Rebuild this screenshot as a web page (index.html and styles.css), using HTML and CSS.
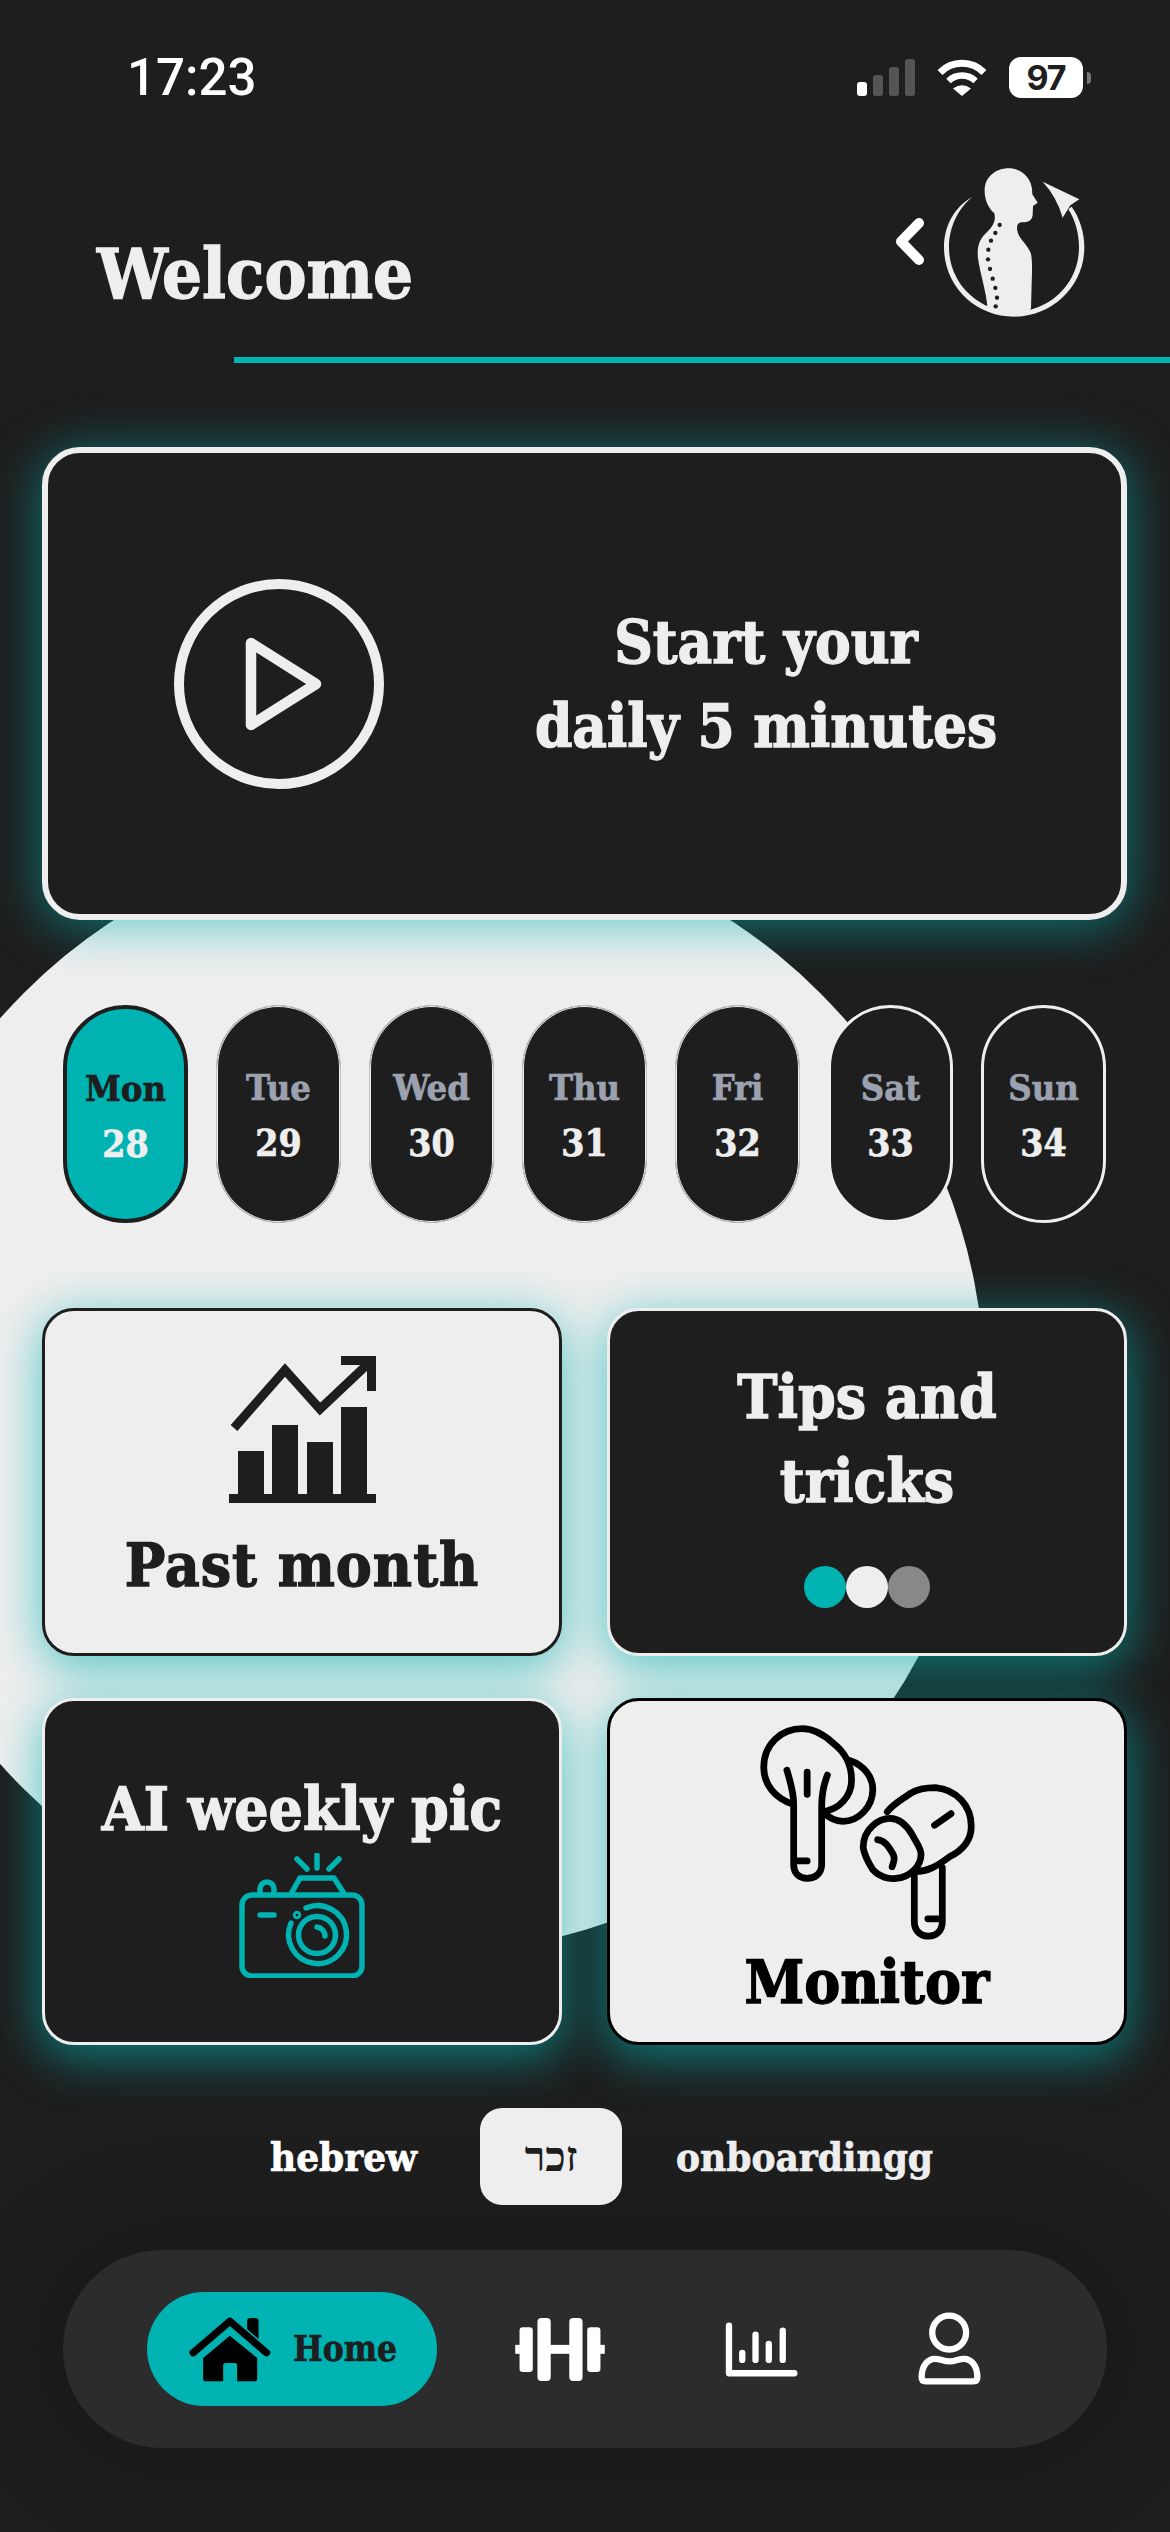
FILE: index.html
```html
<!DOCTYPE html>
<html lang="en">
<head>
<meta charset="utf-8">
<title>Welcome</title>
<link rel="stylesheet" href="styles.css">
</head>
<body>
<div class="screen">
  <div class="backdrop"></div>

  <div class="status">
    <span class="time">17:23</span>
    <div class="status-icons">
      <div class="signal"><i class="bar bar-1"></i><i class="bar bar-2"></i><i class="bar bar-3"></i><i class="bar bar-4"></i></div>
      <svg class="wifi" viewBox="0 0 50 37" width="50" height="37">
        <path d="M3 13.5A31 31 0 0 1 47 13.5" fill="none" stroke="#fff" stroke-width="7"/>
        <path d="M11.5 22A19.5 19.5 0 0 1 38.500 22" fill="none" stroke="#fff" stroke-width="6.500"/>
        <path d="M25 37L16 29.500Q25 23 34 29.500Z" fill="#fff"/>
      </svg>
      <div class="battery"><span class="battery-level">97</span><i class="battery-cap"></i></div>
    </div>
  </div>

  <header class="header">
    <h1 class="title">Welcome</h1>
    <svg class="back" viewBox="0 0 30 47" width="30" height="47">
      <path d="M24 5L6 23.500L24 42" fill="none" stroke="#fff" stroke-width="10" stroke-linecap="round" stroke-linejoin="round"/>
    </svg>
    <svg class="logo" viewBox="0 0 510 510" width="170" height="170">
      <path fill="#eee" d="M127 110C75 140 42 195 42 262C42 378 136 470 252 470C368 470 463 378 463 262C463 215 447 170 425 140L415 148C436 180 447 220 447 262C447 370 360 455 252 455C145 455 57 370 57 262C57 200 85 145 127 110Z"/>
      <path fill="#eee" d="M338 65L448 118L421 136L398 173Q380 110 338 65Z"/>
      <path fill="#eee" d="M193 160C172 140 163 115 164 88C166 50 198 25 236 25C276 25 304 55 306 88L307 103L323 128L309 138L308 165C306 180 296 188 276 187C264 187 259 197 262 212C266 236 290 250 302 278C308 300 306 340 305 370L303 445L290 462H200L172 440C170 400 150 340 144 295C140 255 150 235 172 215C190 198 198 180 193 160Z"/>
      <g fill="#1e1e1e">
        <circle cx="209" cy="195" r="6.500"/><circle cx="196" cy="219" r="6.500"/><circle cx="183" cy="242" r="6.500"/>
        <circle cx="175" cy="269" r="6.500"/><circle cx="174" cy="298" r="6.500"/><circle cx="180" cy="327" r="6.500"/>
        <circle cx="188" cy="356" r="6.500"/><circle cx="196" cy="384" r="6.500"/><circle cx="201" cy="413" r="6.500"/>
        <circle cx="197" cy="439" r="6.500"/>
      </g>
    </svg>
  </header>
  <div class="rule"></div>

  <section class="start-card">
    <svg class="play" viewBox="0 0 210 210" width="210" height="210">
      <circle cx="105" cy="105" r="100" fill="none" stroke="#eee" stroke-width="10"/>
      <path d="M77 64L142 105L77 146Z" fill="none" stroke="#eee" stroke-width="10.500" stroke-linejoin="round"/>
    </svg>
    <p class="start-text">Start your<br>daily 5 minutes</p>
  </section>

  <div class="days">
    <div class="day day-active"><span class="day-name">Mon</span><span class="day-num">28</span></div>
    <div class="day day-soft"><span class="day-name">Tue</span><span class="day-num">29</span></div>
    <div class="day day-soft"><span class="day-name">Wed</span><span class="day-num">30</span></div>
    <div class="day day-soft"><span class="day-name">Thu</span><span class="day-num">31</span></div>
    <div class="day day-soft"><span class="day-name">Fri</span><span class="day-num">32</span></div>
    <div class="day"><span class="day-name">Sat</span><span class="day-num">33</span></div>
    <div class="day"><span class="day-name">Sun</span><span class="day-num">34</span></div>
  </div>

  <div class="cards">
    <article class="card card-light card-past">
      <svg class="card-icon" viewBox="229 1356 147 147" width="147" height="147">
        <g fill="#1e1e1e">
          <rect x="229" y="1494" width="147" height="9"/>
          <rect x="238" y="1451" width="26" height="44"/>
          <rect x="272" y="1425" width="26" height="70"/>
          <rect x="307" y="1442" width="26" height="53"/>
          <rect x="341" y="1407" width="26" height="88"/>
          <rect x="341" y="1356" width="35" height="9"/>
          <rect x="367" y="1356" width="9" height="35"/>
        </g>
        <path d="M234 1428L285 1370L320 1409L372 1360" fill="none" stroke="#1e1e1e" stroke-width="9"/>
      </svg>
      <h2 class="card-title">Past month</h2>
    </article>

    <article class="card card-dark card-tips">
      <h2 class="card-title">Tips and<br>tricks</h2>
      <div class="dots"><i class="dot dot-teal"></i><i class="dot dot-light"></i><i class="dot dot-grey"></i></div>
    </article>

    <article class="card card-dark card-ai">
      <h2 class="card-title">AI weekly pic</h2>
      <svg class="card-icon" viewBox="240 1852 126 125" width="126" height="125" fill="none" stroke="#00b3b3" stroke-width="5.500" stroke-linecap="round" stroke-linejoin="round">
        <path d="M318 1854V1867M298 1858L308 1868M340 1858L330 1868"/>
        <path d="M293 1891L301 1877H335L344 1891"/>
        <path d="M261 1892V1888A7 7 0 0 1 275 1888V1892"/>
        <rect x="243" y="1894" width="120" height="81" rx="10"/>
        <path d="M261 1914H275"/>
        <circle cx="298" cy="1914" r="1.500"/>
        <path d="M307 1907A29 29 0 1 1 292 1922"/>
        <circle cx="318" cy="1934" r="18.500"/>
        <path d="M318 1926A9 9 0 0 1 326 1935"/>
      </svg>
    </article>

    <article class="card card-light card-monitor">
      <svg class="card-icon" viewBox="751 1714 233 230" width="225" height="222" fill="none" stroke="#000" stroke-width="7" stroke-linecap="round" stroke-linejoin="round">
        <path d="M790 1800C772 1794 760 1780 760 1762C760 1738 778 1722 800 1722C812 1722 822 1728 832 1737C844 1746 851 1760 851 1775C851 1792 838 1806 821 1808"/>
        <path d="M849 1755C864 1760 873 1772 873 1785C873 1803 858 1818 842 1818C834 1818 827 1814 821 1808"/>
        <path d="M784 1765C788 1778 791 1788 791 1800V1863C791 1872 797 1877 805 1877C813 1877 820 1872 820 1863V1803C820 1790 822 1780 826 1770"/>
        <path d="M805 1767V1790M792 1859H805"/>
        <path d="M888 1808C894 1800 902 1796 912 1789C920 1784 930 1783 938 1783C960 1785 975 1802 975 1823C975 1838 966 1848 952 1855C940 1864 930 1870 917 1870"/>
        <path d="M891 1815C880 1815 863 1825 863 1845C864 1852 868 1860 873 1868C880 1876 890 1878 897 1877C912 1876 923 1864 923 1852C923 1846 918 1840 914 1832C908 1822 900 1815 891 1815Z"/>
        <path d="M878 1837C886 1838 890 1845 894 1852C897 1857 894 1861 893 1865"/>
        <path d="M937 1822L954 1810"/>
        <path d="M916 1875V1922C916 1931 922 1937 931 1937C939 1937 945 1931 945 1922V1866"/>
        <path d="M930 1919H941"/>
      </svg>
      <h2 class="card-title">Monitor</h2>
    </article>
  </div>

  <div class="links">
    <span class="link">hebrew</span>
    <span class="chip" lang="he">זכר</span>
    <span class="link link-soft">onboardingg</span>
  </div>

  <nav class="nav">
    <div class="nav-home">
      <svg viewBox="140 100 260 210" width="87" height="70">
        <path d="M320 122Q320 112 330 112H344Q354 112 354 122V175L320 146Z" fill="#000"/>
        <path d="M158 216L268 122L378 216" fill="none" stroke="#000" stroke-width="22" stroke-linecap="round" stroke-linejoin="round"/>
        <path d="M188 232L268 165L350 232V294Q350 302 342 302H290V254Q290 247 283 247H255Q248 247 248 254V302H196Q188 302 188 294Z" fill="#000"/>
      </svg>
      <span class="nav-label">Home</span>
    </div>
    <svg class="nav-gym" viewBox="1125 112 270 190" width="90" height="63">
      <g fill="#fff">
        <rect x="1192" y="112" width="40" height="190" rx="12"/>
        <rect x="1288" y="112" width="40" height="190" rx="12"/>
        <rect x="1138" y="140" width="40" height="135" rx="10"/>
        <rect x="1342" y="140" width="40" height="135" rx="10"/>
        <rect x="1125" y="193" width="14" height="27"/>
        <rect x="1381" y="193" width="14" height="27"/>
        <rect x="1230" y="193" width="60" height="27"/>
      </g>
    </svg>
    <svg class="nav-stats" viewBox="70 85 235 183" width="78" height="61" fill="none" stroke="#fff" stroke-linecap="round" stroke-linejoin="round">
      <path d="M88 105V248H285" stroke-width="19"/>
      <path d="M128 187V208M168 132V208M208 160V208M250 120V208" stroke-width="19"/>
    </svg>
    <svg class="nav-me" viewBox="645 60 208 235" width="69" height="78" fill="none" stroke="#fff" stroke-width="19" stroke-linejoin="round">
      <circle cx="748" cy="128" r="51"/>
      <path d="M665 263C665 226 685 207 705 207C722 207 730 215 749 215C768 215 776 207 793 207C813 207 833 226 833 263Q833 275 821 275H677Q665 275 665 263Z"/>
    </svg>
  </nav>
</div>
</body>
</html>
```
FILE: styles.css
```css
* { box-sizing: border-box; }

html, body { margin: 0; padding: 0; }

body {
  background: #1e1e1e;
  font-family: "DejaVu Serif Condensed", "DejaVu Serif", serif;
  font-stretch: condensed;
  font-weight: 700;
  color: #eee;
}

.screen {
  position: relative;
  isolation: isolate;
  width: 1170px;
  height: 2532px;
  padding-top: 57px;
  overflow: hidden;
  background: #1e1e1e;
}

.backdrop {
  position: absolute;
  z-index: -1;
  left: -141px;
  top: 828px;
  width: 1126px;
  height: 1126px;
  border-radius: 50%;
  background: #eee;
}

/* Slab headings are drawn a touch heavier than the font's bold */
.title, .start-text, .card-title { -webkit-text-stroke: 1.3px currentColor; }
.day-name, .day-num, .link, .nav-label { -webkit-text-stroke: 0.7px currentColor; }

/* Status bar */
.status {
  display: flex;
  align-items: center;
  justify-content: space-between;
  height: 41px;
  padding: 0 79px 0 127px;
}

.time {
  font-family: Roboto, sans-serif;
  font-stretch: normal;
  font-weight: 500;
  font-size: 51px;
  line-height: 41px;
  color: #fff;
}

.status-icons { display: flex; align-items: center; gap: 22px; }

.signal { display: flex; align-items: flex-end; gap: 6px; height: 37px; }
.bar { display: block; width: 10px; border-radius: 3px; background: #555; }
.bar-1 { height: 14px; background: #fff; }
.bar-2 { height: 21px; }
.bar-3 { height: 29px; }
.bar-4 { height: 37px; }

.battery { display: flex; align-items: center; gap: 4px; }
.battery-level {
  width: 74px;
  height: 41px;
  border-radius: 12px;
  background: #fff;
  color: #1e1e1e;
  font-family: Inter, sans-serif;
  font-stretch: normal;
  font-weight: 700;
  font-size: 34px;
  letter-spacing: -1px;
  line-height: 41px;
  text-align: center;
}
.battery-cap { display: block; width: 4px; height: 12px; border-radius: 0 4px 4px 0; background: #777; }

/* Header */
.header {
  display: flex;
  align-items: flex-start;
  height: 170px;
  margin-top: 62px;
  padding: 0 70px 0 97px;
}

.title {
  flex: 1;
  margin: 76px 0 0;
  font-size: 70px;
  line-height: 76px;
}

.back { margin: 58px 5px 0 0; }
.logo { display: block; }

.rule { height: 6px; margin: 27px 0 0 234px; background: #00b3b3; }

/* Start card */
.start-card {
  display: flex;
  align-items: center;
  width: 1085px;
  height: 473px;
  margin: 84px 0 0 42px;
  padding-left: 126px;
  border: 6px solid #eee;
  border-radius: 38px;
  background: #1e1e1e;
  box-shadow: 0 6px 48px 2px rgba(0, 179, 179, 0.55);
}

.start-text {
  width: 560px;
  margin: 0 0 0 102px;
  font-size: 59.5px;
  line-height: 84px;
  text-align: center;
}

/* Day picker */
.days { display: flex; gap: 28px; margin-top: 85px; padding-left: 63px; }

.day {
  display: flex;
  flex-direction: column;
  align-items: center;
  width: 125px;
  height: 218px;
  padding-top: 56px;
  border: 3px solid #eee;
  border-radius: 63px;
  background: #1e1e1e;
}

/* Pills sitting on the light circle get a hairline edge instead of a solid ring */
.day-soft {
  padding-top: 58px;
  border: 1px solid #c4c4c4;
  box-shadow: inset 0 0 0 1px #eee;
}

.day-name { font-size: 36px; line-height: 46px; color: #9ca1af; }
.day-num { margin-top: 10px; font-size: 37px; line-height: 46px; color: #eee; }

.day-active { border: 4px solid #1e1e1e; background: #00b3b3; }
.day-active .day-name { color: #1e1e1e; }

/* Feature cards */
.cards {
  display: grid;
  grid-template-columns: 520px 520px;
  grid-template-rows: 348px 347px;
  column-gap: 45px;
  row-gap: 42px;
  margin: 85px 0 0 42px;
}

.card {
  display: flex;
  flex-direction: column;
  align-items: center;
  border-radius: 32px;
  border-width: 3px;
  border-style: solid;
  box-shadow: 0 10px 46px 3px rgba(0, 179, 179, 0.6);
}

.card-light { background: #eee; border-color: #1e1e1e; color: #1e1e1e; }
.card-dark { background: #1e1e1e; border-color: #eee; color: #eee; }
.card-monitor { border-color: #000; color: #000; }

.card-icon { display: block; flex: none; }

.card-title {
  margin: 0;
  font-size: 60px;
  line-height: 84px;
  text-align: center;
}

.card-past { padding-top: 45px; }
.card-past .card-title { margin-top: 20px; letter-spacing: 1px; }

.card-tips { padding-top: 44px; }
.dots { display: flex; margin-top: 43px; }
.dot { display: block; width: 42px; height: 42px; border-radius: 50%; }
.dot-teal { background: #00b3b3; }
.dot-light { background: #eee; }
.dot-grey { background: #888; }

.card-ai { padding-top: 66px; }
.card-ai .card-title { margin-bottom: 2px; }

.card-monitor { padding-top: 20px; }
.card-monitor .card-title { margin-top: -3px; }

/* Links row */
.links {
  display: flex;
  align-items: center;
  height: 97px;
  margin-top: 63px;
  padding-left: 270px;
}

.link { font-size: 40px; line-height: 48px; color: #fff; }
.link-soft { color: #eee; }

.chip {
  display: flex;
  align-items: center;
  justify-content: center;
  width: 142px;
  height: 97px;
  margin: 0 54px 0 63px;
  border-radius: 22px;
  background: #eee;
  color: #1e1e1e;
  font-family: "Liberation Serif", serif;
  font-stretch: normal;
  font-size: 42px;
}

/* Bottom navigation */
.nav {
  display: flex;
  align-items: center;
  width: 1044px;
  height: 198px;
  margin: 45px 0 0 63px;
  padding-left: 84px;
  border-radius: 99px;
  background: #2c2c2c;
  box-shadow: 0 0 90px 30px rgba(0, 0, 0, 0.16);
}

.nav-home {
  display: flex;
  align-items: center;
  width: 290px;
  height: 114px;
  padding-left: 40px;
  border-radius: 57px;
  background: #00b3b3;
}

.nav-label { margin-left: 19px; font-size: 35px; line-height: 40px; color: #1e1e1e; }

.nav-gym { margin-left: 78px; }
.nav-stats { margin-left: 118px; }
.nav-me { margin-left: 114px; }
```
